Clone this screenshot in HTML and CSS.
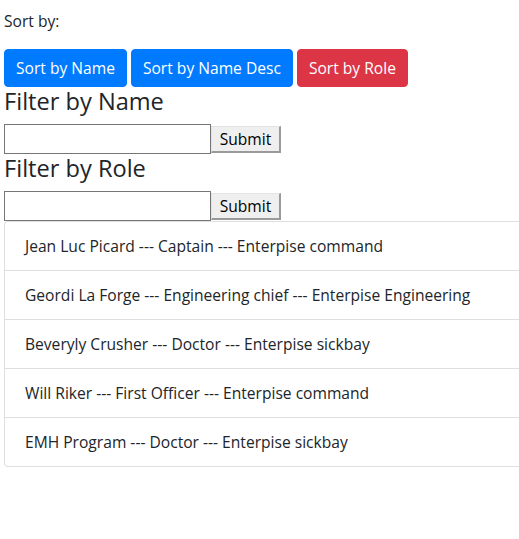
FILE: index.html
```html
<!DOCTYPE html>
<html lang="en">
<head>
<meta charset="utf-8">
<title>Crew</title>
<link rel="stylesheet" href="styles.css">
</head>
<body>
<div class="app">
  <p class="sort-label">Sort by:</p>
  <div class="sort-buttons"><button class="btn btn-primary">Sort by Name</button> <button class="btn btn-primary">Sort by Name Desc</button> <button class="btn btn-danger">Sort by Role</button></div>
  <h4 class="filter-title">Filter by Name</h4>
  <form class="filter-form"><input type="text" class="filter-input"><button type="button" class="submit">Submit</button></form>
  <h4 class="filter-title">Filter by Role</h4>
  <form class="filter-form"><input type="text" class="filter-input"><button type="button" class="submit">Submit</button></form>
  <ul class="list-group">
    <li class="list-group-item">Jean Luc Picard --- Captain --- Enterpise command</li>
    <li class="list-group-item">Geordi La Forge --- Engineering chief --- Enterpise Engineering</li>
    <li class="list-group-item">Beveryly Crusher --- Doctor --- Enterpise sickbay</li>
    <li class="list-group-item">Will Riker --- First Officer --- Enterpise command</li>
    <li class="list-group-item">EMH Program --- Doctor --- Enterpise sickbay</li>
  </ul>
</div>
</body>
</html>
```
FILE: styles.css
```css
body {
  margin: 0;
  background: #fff;
  color: #212529;
  font-family: "Open Sans", "Noto Sans", sans-serif;
  font-size: 15.6px;
  line-height: 24px;
}
.app {
  padding: 9px 0 0 4px;
}
.sort-label {
  margin: 0 0 16px;
}
.sort-buttons {
  font-size: 0;
}
.btn {
  display: inline-block;
  font-family: inherit;
  font-size: 15.6px;
  line-height: 24px;
  padding: 6px 11px;
  border: 1px solid transparent;
  border-radius: 4px;
  color: #fff;
  margin-right: 4px;
  cursor: pointer;
}
.btn-primary {
  background: #007bff;
  border-color: #007bff;
}
.btn-danger {
  background: #dc3545;
  border-color: #dc3545;
}
.filter-title {
  margin: 0 0 8px;
  font-size: 23.6px;
  font-weight: 400;
  line-height: 28.8px;
}
.filter-form {
  margin: 0;
  display: flex;
  align-items: center;
}
.filter-input {
  box-sizing: border-box;
  width: 207px;
  height: 30px;
  margin: 0;
  border: 1px solid #767676;
  border-radius: 0;
  background: #fff;
  font-family: inherit;
  font-size: 15.6px;
}
.submit {
  box-sizing: border-box;
  height: 27px;
  width: 70px;
  margin: 1px 0 0 0;
  padding: 0 6px;
  font-family: inherit;
  font-size: 15.6px;
  line-height: 22px;
  color: #000;
  background: #efefef;
  border-style: solid;
  border-width: 1px 2px 2px 1px;
  border-color: #e3e3e3 #9a9a9a #9a9a9a #e3e3e3;
  border-radius: 0;
}
.list-group {
  list-style: none;
  margin: 0;
  padding: 0;
  border: 1px solid rgba(0, 0, 0, 0.125);
  border-right: 0;
  border-radius: 4px 0 0 4px;
}
.list-group-item {
  padding: 12px 20px;
  border-top: 1px solid rgba(0, 0, 0, 0.125);
}
.list-group-item:first-child {
  border-top: 0;
}
```
